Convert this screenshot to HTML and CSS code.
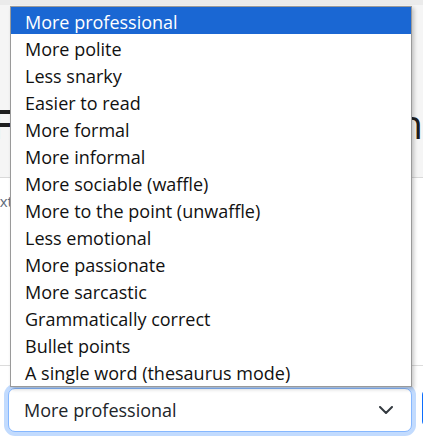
FILE: index.html
```html
<!DOCTYPE html>
<html lang="en">
<head>
<meta charset="utf-8">
<title>Rephrase</title>
<link rel="stylesheet" href="styles.css">
</head>
<body>
<div class="page">
  <div class="topbar"></div>
  <header class="header">
    <h1 class="title"><span class="title-left">Fre</span><span class="title-right">Tone option</span></h1>
  </header>
  <main class="main">
    <p class="desc">Text to rephrase</p>
    <div class="rule"></div>
    <div class="controls">
      <div class="select">
        <span class="select-value">More professional</span>
        <svg class="chevron" width="14" height="8" viewBox="0 0 14 8"><path d="M1 1l6 6 6-6" fill="none" stroke="#343a40" stroke-width="2" stroke-linecap="round" stroke-linejoin="round"/></svg>
      </div>
      <button class="btn">Rephrase</button>
    </div>
  </main>
  <ul class="listbox">
    <li class="option selected">More professional</li>
    <li class="option">More polite</li>
    <li class="option">Less snarky</li>
    <li class="option">Easier to read</li>
    <li class="option">More formal</li>
    <li class="option">More informal</li>
    <li class="option">More sociable (waffle)</li>
    <li class="option">More to the point (unwaffle)</li>
    <li class="option">Less emotional</li>
    <li class="option">More passionate</li>
    <li class="option">More sarcastic</li>
    <li class="option">Grammatically correct</li>
    <li class="option">Bullet points</li>
    <li class="option">A single word (thesaurus mode)</li>
  </ul>
</div>
</body>
</html>
```
FILE: styles.css
```css
html, body {
  margin: 0;
  padding: 0;
  background: #ffffff;
}
body {
  font-family: "Open Sans", "Noto Sans", sans-serif;
  color: #212529;
}
.page {
  position: relative;
  width: 423px;
  height: 446px;
  overflow: hidden;
}
.topbar {
  height: 5px;
  background: #ebebeb;
}
.header {
  background: #f5f5f5;
  padding: 95px 0 29px;
  border-bottom: 1px solid #d9d9d9;
}
.title {
  margin: 0;
  display: flex;
  justify-content: space-between;
  white-space: nowrap;
  font-size: 40px;
  line-height: 48px;
  font-weight: 600;
  color: #1e1e1e;
}
.title-left {
  text-indent: -9px;
}
.title-right {
  font-weight: 400;
}
.main {
  padding: 0;
}
.desc {
  margin: 13px 0 0;
  font-size: 15px;
  line-height: 20px;
  color: #5f6b7a;
  text-indent: -17px;
  white-space: nowrap;
}
.rule {
  height: 1px;
  background: #dcdcdc;
  margin-top: 154px;
}
.controls {
  display: flex;
  align-items: flex-start;
  margin-top: 22px;
  padding-left: 8px;
}
.select {
  flex-shrink: 0;
  box-sizing: border-box;
  width: 404px;
  height: 44px;
  border: 1px solid #86b7fe;
  border-radius: 7px;
  box-shadow: 0 0 0 4px rgba(13, 110, 253, 0.25);
  background: #ffffff;
  display: flex;
  align-items: center;
  justify-content: space-between;
  padding: 0 18px 0 15px;
  font-size: 18px;
  color: #212529;
}
.chevron {
  display: block;
}
.btn {
  flex-shrink: 0;
  width: 120px;
  height: 38px;
  margin: 1px 0 0 10px;
  border: none;
  border-radius: 6px;
  background: #0d6efd;
  color: #ffffff;
  font-family: "Open Sans", sans-serif;
  font-size: 16px;
}
.listbox {
  position: absolute;
  top: 6px;
  left: 10px;
  width: 402px;
  box-sizing: border-box;
  margin: 0;
  padding: 0 0 1px;
  list-style: none;
  background: #ffffff;
  border: 1px solid #9a9a9a;
  box-shadow: 2px 2px 4px rgba(0, 0, 0, 0.22);
}
.option {
  padding: 3px 0 0 14px;
  line-height: 24px;
  font-size: 18px;
  color: #111111;
  white-space: nowrap;
}
.option.selected {
  background: #1a67d3;
  color: #ffffff;
}
```
